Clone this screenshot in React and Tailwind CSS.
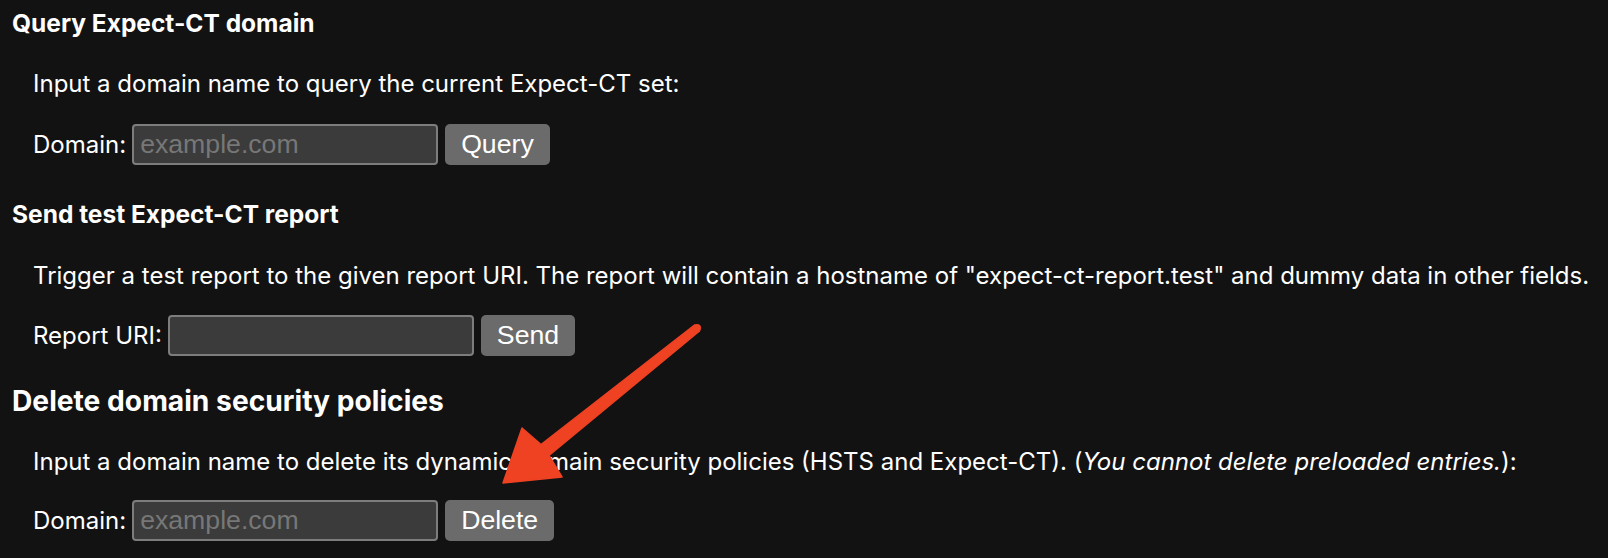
import React from 'react';

const Row = ({ label, placeholder, button }) => (
    <div className="flex items-center pl-[21px]">
        <span className="mr-[6px]">{label}</span>
        <input
            type="text"
            placeholder={placeholder}
            className="w-[306px] h-[41px] px-[6px] bg-[#3b3b3b] border-2 border-[#7d7d7d] rounded-[4px] text-white font-['Liberation_Sans',Arial,sans-serif] text-[26.67px] placeholder:text-[#777777] outline-none"
        />
        <button className="ml-[7px] h-[41px] px-[16px] bg-[#6b6b6b] rounded-[5px] text-white font-['Liberation_Sans',Arial,sans-serif] text-[26.67px] leading-none">
            {button}
        </button>
    </div>
);

const Arrow = () => (
    <svg className="absolute left-0 top-0 pointer-events-none" width="1608" height="558">
        <polygon
            points="699.5,331 549,455.5 562,477 503,483 522,428 541,444.5 694.5,325"
            fill="#ee4223"
            stroke="#ee4223"
            strokeWidth="1.5"
            strokeLinejoin="round"
        />
        <circle cx="697" cy="328" r="4" fill="#ee4223" />
    </svg>
);

export default function App() {
    return (
        <div className="relative min-h-screen bg-[#121212] text-white font-['Inter',sans-serif] text-[24px] leading-[28px] overflow-hidden">
            <div className="pl-[12px] pt-[9px] whitespace-nowrap">
                <h4 className="text-[24.5px] leading-[28px] font-bold">Query Expect-CT domain</h4>
                <p className="mt-[33px] pl-[21px]">Input a domain name to query the current Expect-CT set:</p>
                <div className="mt-[26px]">
                    <Row label="Domain:" placeholder="example.com" button="Query" />
                </div>

                <h4 className="mt-[35px] text-[24.5px] leading-[28px] font-bold">Send test Expect-CT report</h4>
                <p className="mt-[34px] pl-[21px]">
                    Trigger a test report to the given report URI. The report will contain a hostname of "expect-ct-report.test" and dummy data in other fields.
                </p>
                <div className="mt-[25px]">
                    <Row label="Report URI:" placeholder="" button="Send" />
                </div>

                <h3 className="mt-[28px] text-[28.2px] leading-[34px] font-bold">Delete domain security policies</h3>
                <p className="mt-[30px] pl-[21px]">
                    Input a domain name to delete its dynamic domain security policies (HSTS and Expect-CT). (<i>You cannot delete preloaded entries.</i>):
                </p>
                <div className="mt-[24px]">
                    <Row label="Domain:" placeholder="example.com" button="Delete" />
                </div>
            </div>
            <Arrow />
        </div>
    );
}
